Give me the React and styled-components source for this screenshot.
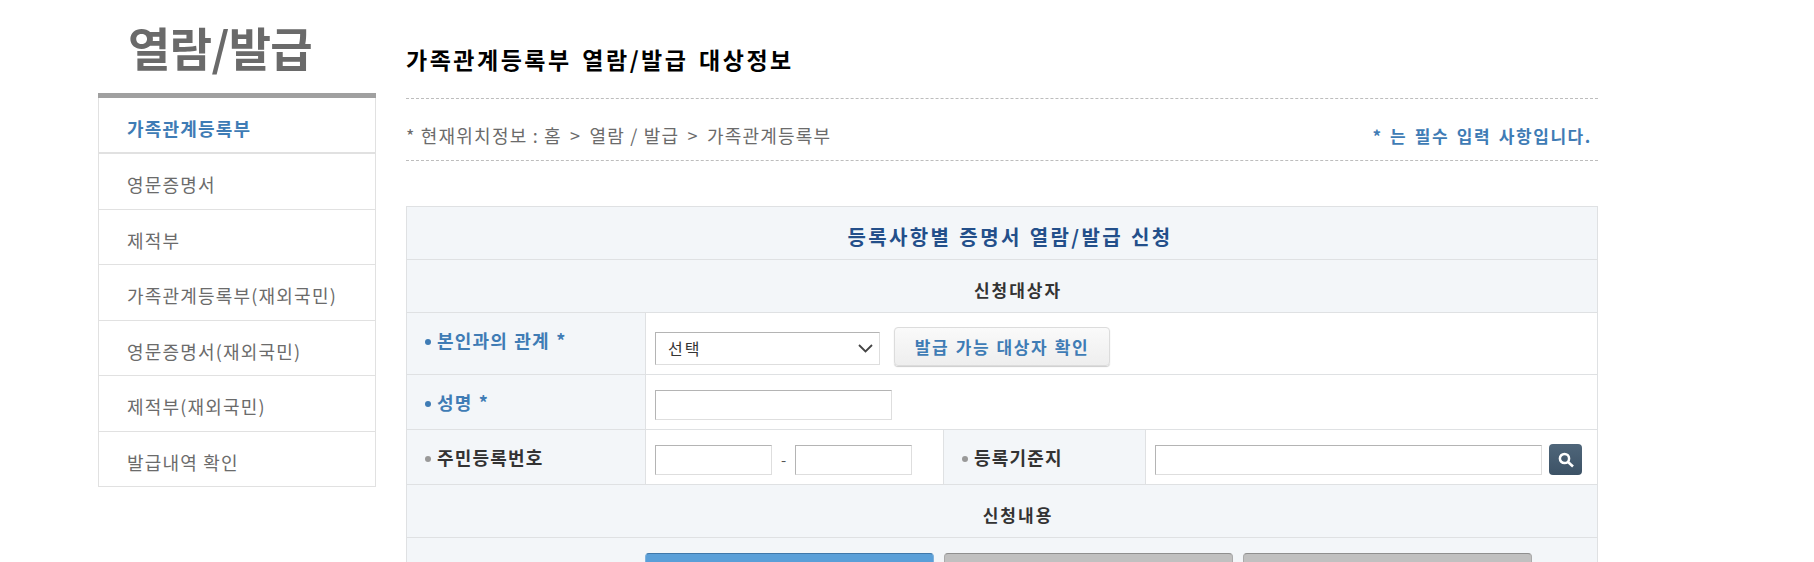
import React from "react";
import styled, { createGlobalStyle } from "styled-components";

const Global = createGlobalStyle`
  html, body { margin: 0; padding: 0; background: #fff; height: 562px; overflow: hidden; }
  body { font-family: "Noto Sans CJK KR", "Noto Sans", sans-serif; }
  * { box-sizing: border-box; }
`;

const Page = styled.div`
  display: flex;
  align-items: flex-start;
  width: 1814px;
  height: 562px;
  padding-left: 98px;
  overflow: hidden;
`;

const Sidebar = styled.aside`
  flex: 0 0 278px;
  width: 278px;
  margin-right: 30px;
`;

const SideTitle = styled.h2`
  margin: 0;
  height: 93px;
  padding: 15px 0 0 30px;
  font-size: 46px;
  line-height: 62px;
  font-weight: 700;
  letter-spacing: -0.6px;
  color: #6a6a6a;
  filter: blur(0.5px);
`;

const Menu = styled.ul`
  margin: 0;
  padding: 0;
  list-style: none;
  border-top: 5px solid #a0a0a0;
`;

const MenuItem = styled.li`
  height: ${(p) => (p.$active ? "56px" : "55.5px")};
  padding: 6px 0 0 28px;
  display: flex;
  align-items: center;
  border-left: 1px solid #e1e1e1;
  border-right: 1px solid #e1e1e1;
  border-bottom: ${(p) => (p.$active ? "2px" : "1px")} solid #e1e1e1;
  font-size: 18px;
  letter-spacing: 1.2px;
  font-weight: ${(p) => (p.$active ? 700 : 400)};
  color: ${(p) => (p.$active ? "#3f7cb5" : "#6b6b6b")};
`;

const Main = styled.main`
  flex: 0 0 1192px;
  width: 1192px;
`;

const Heading = styled.h1`
  margin: 0;
  height: 99px;
  padding-top: 43px;
  font-size: 23px;
  line-height: 32px;
  font-weight: 700;
  letter-spacing: 2.5px;
  word-spacing: 3px;
  color: #000;
  border-bottom: 1px dashed #bdbdbd;
`;

const Crumbs = styled.div`
  display: flex;
  justify-content: space-between;
  align-items: center;
  height: 62px;
  padding: 11px 6px 0 0;
  font-size: 18px;
  letter-spacing: 1.2px;
  color: #6b6b6b;
  border-bottom: 1px dashed #bdbdbd;
`;

const Sep = styled.span`
  margin: 0 3px;
`;

const Required = styled.span`
  font-size: 17px;
  font-weight: 700;
  color: #3f7cb5;
  letter-spacing: 1.6px;
  word-spacing: 2px;
`;

const FormTable = styled.table`
  width: 1192px;
  margin-top: 45px;
  table-layout: fixed;
  border-collapse: collapse;
  background: #f3f6f9;
  border: 1px solid #dfe1e3;
`;

const Row = styled.tr`
  height: ${(p) => p.$h}px;
`;

const Banner = styled.th`
  padding: 6px 0 0 ${(p) => (p.$main ? 16 : 32)}px;
  border: 1px solid #dfe1e3;
  text-align: center;
  font-size: ${(p) => (p.$main ? 20 : 17)}px;
  letter-spacing: ${(p) => (p.$main ? 2.4 : 2)}px;
  word-spacing: ${(p) => (p.$main ? 1 : 0)}px;
  font-weight: 700;
  color: ${(p) => (p.$main ? "#234f8a" : "#333")};
`;

const Label = styled.th`
  padding: 0 0 ${(p) => p.$lift || 0}px 18px;
  border: 1px solid #dfe1e3;
  text-align: left;
  vertical-align: middle;
  font-size: 18px;
  letter-spacing: 1.2px;
  word-spacing: 1px;
  font-weight: 700;
  color: ${(p) => (p.$req ? "#3f7cb5" : "#333")};
  background: #f3f6f9;
`;

const Dot = styled.span`
  display: inline-block;
  width: 6px;
  height: 6px;
  margin-right: 6px;
  border-radius: 50%;
  vertical-align: 3px;
  background: ${(p) => (p.$req ? "#3f7cb5" : "#999")};
`;

const Value = styled.td`
  padding: 5px 0 0 9px;
  border: 1px solid #dfe1e3;
  background: #fff;
  vertical-align: middle;
`;

const Controls = styled.div`
  display: flex;
  align-items: ${(p) => p.$align || "center"};
  gap: ${(p) => p.$gap || 0}px;
`;

const fieldBorder = `
  border: 1px solid #dedede;
  border-top-color: #b4b4b4;
  border-left-color: #b4b4b4;
  background: #fff;
`;

const SelectBox = styled.div`
  ${fieldBorder}
  width: 225px;
  height: 33px;
  margin-bottom: 1px;
  padding: 0 6px 0 12px;
  display: flex;
  align-items: center;
  justify-content: space-between;
  font-size: 16px;
  letter-spacing: 2px;
  color: #333;
`;

const Input = styled.div`
  ${fieldBorder}
  flex: none;
  width: ${(p) => p.$w}px;
  height: 30px;
`;

const CheckButton = styled.div`
  width: 216px;
  height: 39px;
  display: flex;
  align-items: center;
  justify-content: center;
  border: 1px solid #dcdcdc;
  border-radius: 4px;
  background: linear-gradient(#fafafa, #eeeeee);
  box-shadow: 0 1px 1px #ccc;
  font-size: 17px;
  letter-spacing: 1.6px;
  word-spacing: 1px;
  font-weight: 700;
  color: #3f7cb5;
`;

const Dash = styled.span`
  width: 23px;
  text-align: center;
  font-size: 15px;
  color: #555;
`;

const SearchButton = styled.div`
  width: 33px;
  height: 31px;
  margin-left: 7px;
  display: flex;
  align-items: center;
  justify-content: center;
  border-radius: 4px;
  background: linear-gradient(#4f667a, #3c5266);
`;

const TabCell = styled.td`
  padding: 15px 0 0 238px;
  border: 1px solid #dfe1e3;
  vertical-align: top;
`;

const Tabs = styled.div`
  display: flex;
  gap: 10px;
`;

const Tab = styled.div`
  width: 289px;
  height: 40px;
  border: 1px solid ${(p) => (p.$on ? "#7fb2dd" : "#aaa")};
  border-top-color: ${(p) => (p.$on ? "#3f78aa" : "#8f8f8f")};
  border-radius: 4px 4px 0 0;
  background: ${(p) => (p.$on ? "#5a9fd8" : "#c0c0c0")};
`;

const Chevron = () => (
  <svg width="15" height="9" viewBox="0 0 15 9" fill="none" stroke="#444" strokeWidth="1.8">
    <path d="M1 1l6.5 6.5L14 1" />
  </svg>
);

const Magnifier = () => (
  <svg width="18" height="18" viewBox="0 0 18 18" fill="none" stroke="#fff">
    <circle cx="7.5" cy="7.5" r="4.6" strokeWidth="2.5" />
    <path d="M11 11l5 4.5" strokeWidth="2.6" />
  </svg>
);

const menu = ["가족관계등록부", "영문증명서", "제적부", "가족관계등록부(재외국민)", "영문증명서(재외국민)", "제적부(재외국민)", "발급내역 확인"];

export default function App() {
  return (
    <>
      <Global />
      <Page>
        <Sidebar>
          <SideTitle>열람/발급</SideTitle>
          <Menu>
            {menu.map((m, i) => (
              <MenuItem key={m} $active={i === 0}>{m}</MenuItem>
            ))}
          </Menu>
        </Sidebar>
        <Main>
          <Heading>가족관계등록부 열람/발급 대상정보</Heading>
          <Crumbs>
            <span>* 현재위치정보 : 홈 <Sep>&gt;</Sep> 열람 / 발급 <Sep>&gt;</Sep> 가족관계등록부</span>
            <Required>* 는 필수 입력 사항입니다.</Required>
          </Crumbs>
          <FormTable>
            <colgroup>
              <col style={{ width: 239 }} />
              <col style={{ width: 298 }} />
              <col style={{ width: 202 }} />
              <col />
            </colgroup>
            <tbody>
              <Row $h={53}><Banner colSpan={4} $main>등록사항별 증명서 열람/발급 신청</Banner></Row>
              <Row $h={53}><Banner colSpan={4}>신청대상자</Banner></Row>
              <Row $h={62}>
                <Label $req $lift={8}><Dot $req />본인과의 관계 *</Label>
                <Value colSpan={3}>
                  <Controls $gap={14} $align="flex-end">
                    <SelectBox>선택<Chevron /></SelectBox>
                    <CheckButton>발급 가능 대상자 확인</CheckButton>
                  </Controls>
                </Value>
              </Row>
              <Row $h={55}>
                <Label $req><Dot $req />성명 *</Label>
                <Value colSpan={3}><Input $w={237} /></Value>
              </Row>
              <Row $h={55}>
                <Label><Dot />주민등록번호</Label>
                <Value>
                  <Controls>
                    <Input $w={117} />
                    <Dash>-</Dash>
                    <Input $w={117} />
                  </Controls>
                </Value>
                <Label><Dot />등록기준지</Label>
                <Value>
                  <Controls>
                    <Input $w={387} />
                    <SearchButton><Magnifier /></SearchButton>
                  </Controls>
                </Value>
              </Row>
              <Row $h={53}><Banner colSpan={4}>신청내용</Banner></Row>
              <Row $h={60}>
                <TabCell colSpan={4}>
                  <Tabs>
                    <Tab $on />
                    <Tab />
                    <Tab />
                  </Tabs>
                </TabCell>
              </Row>
            </tbody>
          </FormTable>
        </Main>
      </Page>
    </>
  );
}
